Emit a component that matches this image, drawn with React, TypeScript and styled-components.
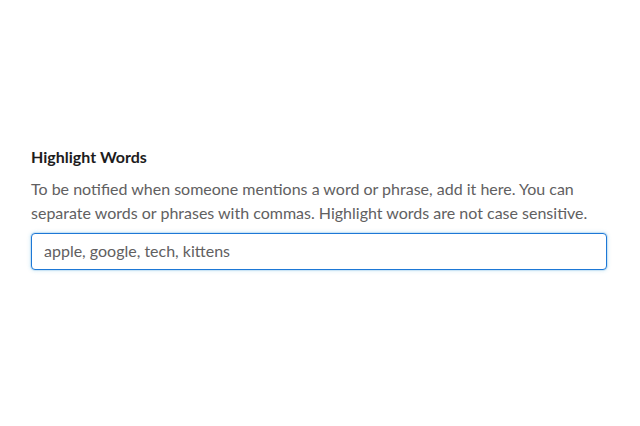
import React from "react";
import styled, { createGlobalStyle } from "styled-components";

const Global = createGlobalStyle`
  html, body { margin: 0; padding: 0; background: #fff; }
  body { font-family: Lato, "Noto Sans", sans-serif; -webkit-font-smoothing: antialiased; }
`;

const Page = styled.div`
  width: 640px;
  height: 426px;
  box-sizing: border-box;
  padding: 147px 33px 0 31px;
`;

const Heading = styled.h2`
  margin: 0;
  font-size: 16px;
  line-height: 20px;
  font-weight: 700;
  color: #1d1c1d;
`;

const Description = styled.p`
  margin: 10px 0 8px;
  font-size: 16px;
  line-height: 24px;
  color: #616061;
`;

const Input = styled.input`
  display: block;
  width: 100%;
  box-sizing: border-box;
  height: 37px;
  padding: 0 12px 2px;
  border: 1px solid #1d78d6;
  border-radius: 4px;
  box-shadow: 0 0 0 1px rgba(29, 120, 214, 0.12), 0 0 4px rgba(29, 155, 209, 0.3);
  font-family: Lato, "Noto Sans", sans-serif;
  font-size: 16px;
  color: #616061;
  outline: none;
  background: #fff;
`;

export default function App() {
  return (
    <>
      <Global />
      <Page>
        <Heading>Highlight Words</Heading>
        <Description>
          To be notified when someone mentions a word or phrase, add it here. You can separate words or phrases with commas. Highlight words are not case sensitive.
        </Description>
        <Input defaultValue="apple, google, tech, kittens" />
      </Page>
    </>
  );
}
